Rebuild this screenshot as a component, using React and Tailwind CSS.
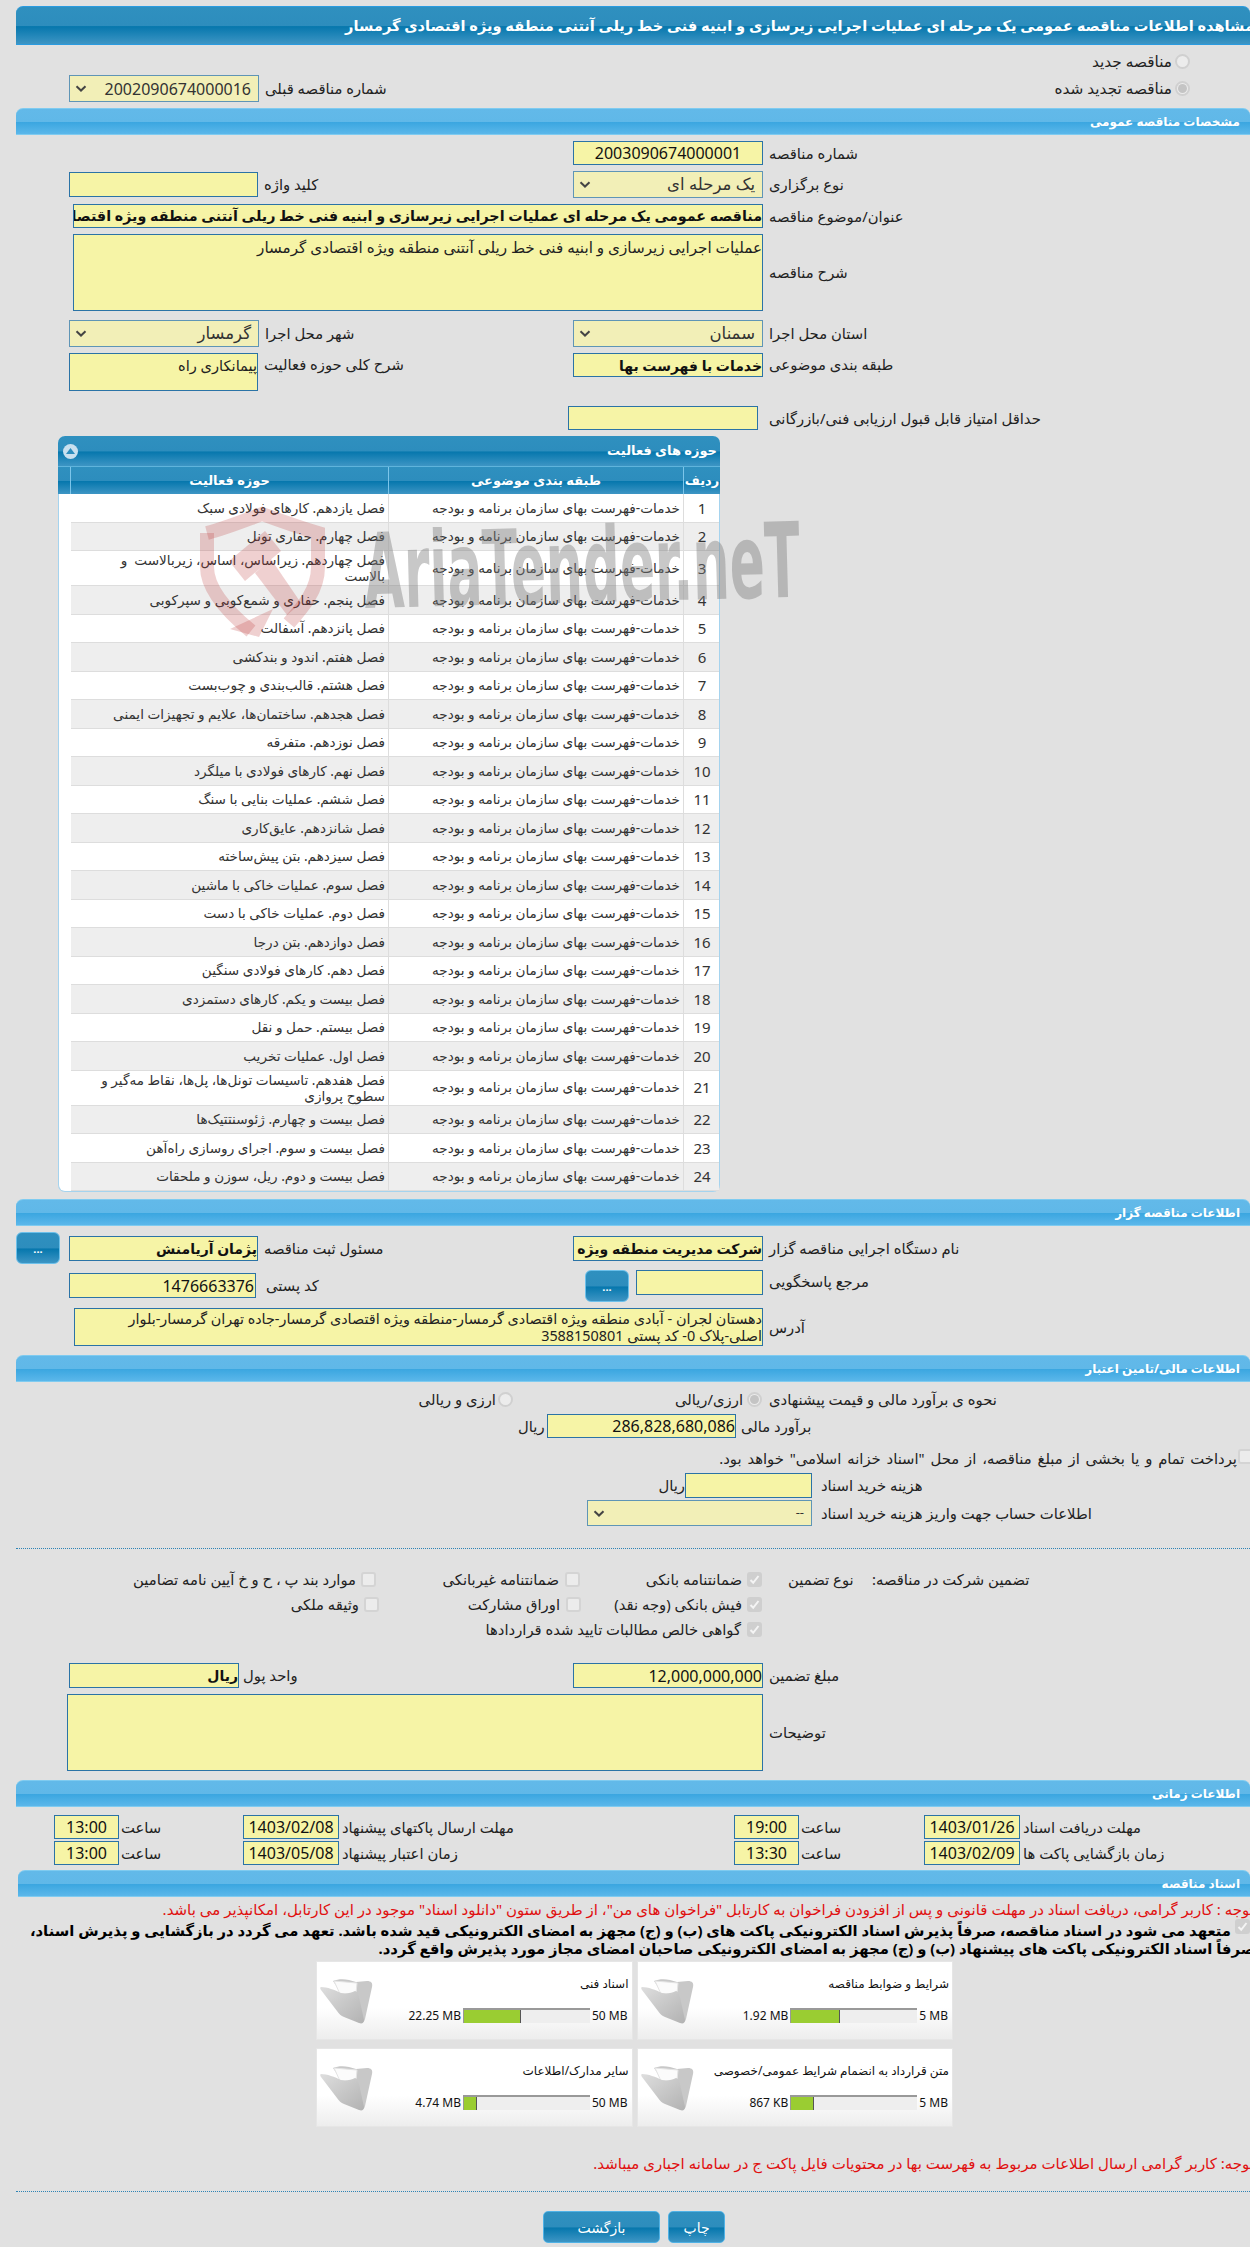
const barCls = "mt-[6px] h-[27px] ml-[16px] rounded-t-[7px] border-t border-b border-[#7fcbf0] bg-[linear-gradient(#62b9e9_0%,#60b8e8_50%,#3aa6e0_52%,#5bb7ea_100%)] flex items-center justify-end pr-[10px] text-white font-bold text-[12px]";
const darkGrad = "bg-[linear-gradient(#2f90bf_0%,#2d8dbd_50%,#0677ad_53%,#3d95c4_100%)]";
const inputCls = "bg-[#f6f4a6] border border-[#2b73a6] shrink-0 flex items-center overflow-hidden whitespace-nowrap text-[#111]";
const selectCls = "bg-[#f2efb7] border border-[#5f95b6] shrink-0 flex items-center justify-between overflow-hidden whitespace-nowrap text-[#333] pl-[5px] pr-[7px]";

function Bar({ children, className = "" }) {
  return <div className={barCls + " " + className}><span dir="rtl">{children}</span></div>;
}
function Label({ children, className = "" }) {
  const gap = className.includes("ml-") ? "" : "ml-[6px] ";
  return <span dir="rtl" className={gap + "whitespace-nowrap text-[14.8px] text-left text-[#222] shrink-0 " + className}>{children}</span>;
}
function Chevron() {
  return (
    <svg width="12" height="7" viewBox="0 0 12 7" fill="none" className="shrink-0">
      <path d="M1.5 1.2 6 5.5 10.5 1.2" stroke="#444" strokeWidth="2" />
    </svg>
  );
}
function Select({ w, children, size = "text-[16.5px]" }) {
  return (
    <div className={selectCls + " " + w + " h-[27px]"}>
      <Chevron />
      <span dir="rtl" className={size}>{children}</span>
    </div>
  );
}
function Radio({ on }) {
  return (
    <span className="w-[15px] h-[15px] rounded-full border-2 border-[#d0d0d0] bg-[#ececec] shrink-0 flex items-center justify-center">
      {on ? <span className="w-[9px] h-[9px] rounded-full bg-[#c4c4c4]" /> : null}
    </span>
  );
}
function Check({ on }) {
  return on ? (
    <span className="w-[15px] h-[15px] rounded-[3px] bg-[#cfcfcf] shrink-0 flex items-center justify-center">
      <svg width="11" height="11" viewBox="0 0 11 11" fill="none"><path d="M1.5 6 4.2 8.8 9.5 2" stroke="#f4f4f4" strokeWidth="2" /></svg>
    </span>
  ) : (
    <span className="block w-[15px] h-[15px] rounded-[3px] border-2 border-[#d4d4d4] bg-[#ececec] shrink-0" />
  );
}
function DotsButton() {
  return (
    <div className={"w-[44px] h-[32px] rounded-[6px] border border-[#6cc0ea] flex items-end justify-center pb-[9px] text-white text-[11px] font-bold leading-none shrink-0 " + darkGrad}>...</div>
  );
}
function Folder() {
  return (
    <svg width="53" height="46" viewBox="0 0 53 46" className="shrink-0">
      <defs>
        <linearGradient id="folderFront" x1="0" y1="0" x2="1" y2="1">
          <stop offset="0" stopColor="#dedede" />
          <stop offset="1" stopColor="#b2b2b2" />
        </linearGradient>
      </defs>
      <path d="M13 3 C20 0 28 1 36 4 L47 3 C51 3 53 5 52 9 L45 41 C44 45 42 45 40 43 Z" fill="#c8c8c8" />
      <path d="M14 3 L37 5 L36 16 L20 16 Z" fill="#fbfbfb" stroke="#e4e4e4" />
      <path d="M1 9 C7 9 15 12 21 15 C26 16 31 15 35 13 C37 13 38 15 39 19 L44 42 C44 45 42 46 39 45 L24 39 C21 38 19 36 17 33 L1 12 C0 11 0 9 1 9 Z" fill="url(#folderFront)" />
    </svg>
  );
}
function Watermark() {
  return (
    <svg width="620" height="150" viewBox="0 0 620 150" className="absolute left-[132px] top-[59px] pointer-events-none z-10">
      <g fill="none" stroke="#bb3a3a" strokeOpacity="0.24" strokeWidth="14">
        <path d="M16 38 C35 33 52 26 71 19 C90 26 110 33 127 38 L127 72 C127 95 112 112 98 128" />
        <path d="M16 38 L16 72 C16 95 38 118 60 136" />
      </g>
      <polygon points="39,134 82,114 68,142" fill="#bb3a3a" fillOpacity="0.24" />
      <g fill="#bb3a3a" fillOpacity="0.24">
        <polygon points="38,66 74,36 90,56 54,86" />
        <polygon points="64,78 80,64 110,108 96,120" />
      </g>
      <text x="174" y="113" textLength="436" lengthAdjust="spacingAndGlyphs" transform="rotate(-1.5 174 113)" fontFamily="'DejaVu Sans', sans-serif" fontWeight="700" fontSize="104" fill="#7c7c7c" fillOpacity="0.42">AriaTender.neT</text>
    </svg>
  );
}
const rows = [
  "فصل یازدهم. کارهای فولادی سبک",
  "فصل چهارم. حفاری تونل",
  "فصل چهاردهم. زیراساس، اساس، زیربالاست\u00a0 و\nبالاست",
  "فصل پنجم. حفاری و شمع‌کوبی و سپرکوبی",
  "فصل پانزدهم. آسفالت",
  "فصل هفتم. اندود و بندکشی",
  "فصل هشتم. قالب‌بندی و چوب‌بست",
  "فصل هجدهم. ساختمان‌ها، علایم و تجهیزات ایمنی",
  "فصل نوزدهم. متفرقه",
  "فصل نهم. کارهای فولادی با میلگرد",
  "فصل ششم. عملیات بنایی با سنگ",
  "فصل شانزدهم. عایق‌کاری",
  "فصل سیزدهم. بتن پیش‌ساخته",
  "فصل سوم. عملیات خاکی با ماشین",
  "فصل دوم. عملیات خاکی با دست",
  "فصل دوازدهم. بتن درجا",
  "فصل دهم. کارهای فولادی سنگین",
  "فصل بیست و یکم. کارهای دستمزدی",
  "فصل بیستم. حمل و نقل",
  "فصل اول. عملیات تخریب",
  "فصل هفدهم. تاسیسات تونل‌ها، پل‌ها، نقاط مه‌گیر و\nسطوح پروازی",
  "فصل بیست و چهارم. ژئوسنتتیک‌ها",
  "فصل بیست و سوم. اجرای روسازی راه‌آهن",
  "فصل بیست و دوم. ریل، سوزن و ملحقات",
];
function TableRow({ n, text }) {
  const tall = n === 3 || n === 21 ? "h-[35px]" : "h-[28.5px]";
  const bg = n % 2 === 0 ? "bg-[#eeeeee]" : "bg-white";
  return (
    <div className={"grid grid-cols-[318px_295px_36px] border-b border-[#dddddd] box-border " + tall + " " + bg}>
      <div dir="rtl" className="flex items-center pr-[3px] border-r border-[#dddddd] text-[13.6px] leading-[16px] text-[#333] whitespace-pre-line"><span>{text}</span></div>
      <div dir="rtl" className="flex items-center pr-[3px] border-r border-[#dddddd] text-[13.6px] text-[#333] whitespace-nowrap">خدمات-فهرست بهای سازمان برنامه و بودجه</div>
      <div className="flex items-center justify-center text-[15px] text-[#333]">{n}</div>
    </div>
  );
}
function Card({ title, value, max, pct }) {
  return (
    <div className="h-[79px] border border-[#e6e6e6] bg-[linear-gradient(#ffffff_0%,#ffffff_60%,#ededed_100%)] flex pl-[3px]">
      <div className="pt-[16px]"><Folder /></div>
      <div className="flex-1 flex flex-col items-end pr-[3px]">
        <div dir="rtl" className="mt-[12px] h-[20px] leading-[20px] text-[12px] text-[#111] whitespace-nowrap">{title}</div>
        <div className="mt-[14px] flex items-center h-[15px] text-[12px] text-[#111] whitespace-nowrap">
          <span className="mr-[2px]">{value}</span>
          <div className="w-[127px] h-[15px] bg-[#eeeeee] border-t-2 border-l border-[#999999]">
            <div className="h-full bg-[#9acd32] border-r border-[#555555]" style={{ width: pct + "%" }} />
          </div>
          <span className="ml-[2px] mr-[1px]">{max}</span>
        </div>
      </div>
    </div>
  );
}
function TimeCell({ w, v }) {
  return <div className={inputCls + " " + w + " h-[24px] justify-center text-[16px]"}>{v}</div>;
}

export default function App() {
  return (
    <div className="w-[1250px] h-[2247px] bg-[#e1e1e1] overflow-hidden font-['Noto_Sans','DejaVu_Sans',sans-serif] text-[#222]">
      {/* title */}
      <div className={"mt-[6px] h-[39px] ml-[16px] rounded-t-[7px] border-t border-b border-[#2a9be0] overflow-hidden flex items-center justify-end " + darkGrad}>
        <span dir="rtl" className="whitespace-nowrap text-white font-bold text-[14.6px] -mr-[4px] shrink-0">مشاهده اطلاعات مناقصه عمومی یک مرحله ای عملیات اجرایی زیرسازی و ابنیه فنی خط ریلی آنتنی منطقه ویژه اقتصادی گرمسار</span>
      </div>
      <div className="mt-[5px] h-[22px] flex items-center justify-end pr-[60px]">
        <Label className="ml-0 mr-[3px] !text-[15.3px]">مناقصه جدید</Label>
        <Radio />
      </div>
      <div className="mt-[3px] h-[27px] flex items-center pl-[69px] pr-[60px]">
        <Select w="w-[190px]" size="text-[16px]">2002090674000016</Select>
        <Label>شماره مناقصه قبلی</Label>
        <div className="flex-1" />
        <Label className="ml-0 mr-[3px] !text-[15.3px]">مناقصه تجدید شده</Label>
        <Radio on />
      </div>

      <Bar>مشخصات مناقصه عمومی</Bar>

      <div className="mt-[6px] h-[24px] flex items-center pl-[573px]">
        <div className={inputCls + " w-[190px] h-[24px] justify-center text-[16px]"}>2003090674000001</div>
        <Label>شماره مناقصه</Label>
      </div>
      <div className="mt-[6px] h-[27px] flex items-center">
        <div className="w-[573px] pl-[69px] flex items-center">
          <div className={inputCls + " w-[189px] h-[25px]"} />
          <Label>کلید واژه</Label>
        </div>
        <Select w="w-[190px]">یک مرحله ای</Select>
        <Label>نوع برگزاری</Label>
      </div>
      <div className="mt-[6px] h-[24px] flex items-center pl-[73px]">
        <div dir="rtl" className={inputCls + " w-[690px] h-[24px] font-bold text-[14.3px] text-[#000]"}>مناقصه عمومی یک مرحله ای عملیات اجرایی زیرسازی و ابنیه فنی خط ریلی آنتنی منطقه ویژه اقتصادی گرمسار</div>
        <Label>عنوان/موضوع مناقصه</Label>
      </div>
      <div className="mt-[6px] h-[77px] flex items-center pl-[73px]">
        <div dir="rtl" className="w-[690px] h-[77px] bg-[#f6f4a6] border border-[#2b73a6] text-[15.2px] leading-[20px] text-[#222] pt-[2px]">عملیات اجرایی زیرسازی و ابنیه فنی خط ریلی آنتنی منطقه ویژه اقتصادی گرمسار</div>
        <Label>شرح مناقصه</Label>
      </div>
      <div className="mt-[9px] h-[27px] flex items-center">
        <div className="w-[573px] pl-[69px] flex items-center">
          <Select w="w-[190px]">گرمسار</Select>
          <Label>شهر محل اجرا</Label>
        </div>
        <Select w="w-[190px]">سمنان</Select>
        <Label>استان محل اجرا</Label>
      </div>
      <div className="mt-[6px] h-[38px] flex items-start">
        <div className="w-[573px] pl-[69px] flex items-start">
          <div dir="rtl" className="w-[189px] h-[38px] bg-[#f6f4a6] border border-[#2b73a6] text-[14.6px] leading-[20px] pt-[1px] whitespace-nowrap text-[#222]">پیمانکاری راه</div>
          <Label className="leading-[20px] pt-[1px]">شرح کلی حوزه فعالیت</Label>
        </div>
        <div dir="rtl" className={inputCls + " w-[190px] h-[24px] font-bold text-[14px] text-[#000]"}>خدمات با فهرست بها</div>
        <Label className="leading-[20px] pt-[1px]">طبقه بندی موضوعی</Label>
      </div>
      <div className="mt-[15px] h-[24px] flex items-center pl-[568px]">
        <div className={inputCls + " w-[190px] h-[24px]"} />
        <Label className="ml-[11px]">حداقل امتیاز قابل قبول ارزیابی فنی/بازرگانی</Label>
      </div>

      {/* panel */}
      <div className="relative mt-[6px] ml-[58px] w-[662px] h-[756px] bg-white border-x border-b border-[#a5d3ee] rounded-t-[7px] rounded-b-[7px] box-border">
        <div className={"-mx-px h-[30px] rounded-t-[7px] flex items-center justify-between pl-[5px] pr-[3px] " + darkGrad}>
          <span className="w-[15px] h-[15px] rounded-full bg-[#c8e0ef] flex items-center justify-center">
            <svg width="9" height="6" viewBox="0 0 9 6"><path d="M4.5 0 9 6H0Z" fill="#2d8dbd" /></svg>
          </span>
          <span dir="rtl" className="text-white font-bold text-[13px]">حوزه های فعالیت</span>
        </div>
        <div className={"-mx-px h-[28px] grid grid-cols-[13px_318px_295px_36px] text-white font-bold text-[13px] border-t border-[#5fb4dc] " + darkGrad}>
          <div className="border-r border-[#7cc5ea]" />
          <div dir="rtl" className="flex items-center justify-center border-r border-[#7cc5ea]">حوزه فعالیت</div>
          <div dir="rtl" className="flex items-center justify-center border-r border-[#7cc5ea]">طبقه بندی موضوعی</div>
          <div dir="rtl" className="flex items-center justify-center">ردیف</div>
        </div>
        <div className="pl-[12px]">
          {rows.map((t, i) => <TableRow key={i} n={i + 1} text={t} />)}
        </div>
        <Watermark />
      </div>

      <Bar className="!mt-[7px]">اطلاعات مناقصه گزار</Bar>
      <div className="mt-[6px] h-[32px] flex items-center">
        <div className="w-[573px] pl-[16px] flex items-center">
          <DotsButton />
          <div dir="rtl" className={inputCls + " ml-[9px] w-[189px] h-[25px] font-bold text-[14px] text-[#000]"}>پژمان آریامنش</div>
          <Label>مسئول ثبت مناقصه</Label>
        </div>
        <div dir="rtl" className={inputCls + " w-[190px] h-[25px] font-bold text-[14px] text-[#000]"}>شرکت مدیریت منطقه ویژه اقتصادی</div>
        <Label>نام دستگاه اجرایی مناقصه گزار</Label>
      </div>
      <div className="mt-[6px] h-[32px] flex items-start">
        <div className="w-[585px] pl-[69px] flex items-center mt-[3px]">
          <div className={inputCls + " w-[187px] h-[25px] justify-end text-[16px] pr-[1px]"}>1476663376</div>
          <Label className="ml-[10px]">کد پستی</Label>
        </div>
        <DotsButton />
        <div className={inputCls + " ml-[7px] w-[127px] h-[25px]"} />
        <Label>مرجع پاسخگویی</Label>
      </div>
      <div className="mt-[6px] h-[38px] flex items-center pl-[74px]">
        <div dir="rtl" className="w-[689px] h-[38px] bg-[#f6f4a6] border border-[#2b73a6] text-[14.4px] leading-[17px] text-[#222] pt-[1px] whitespace-nowrap overflow-hidden">دهستان لجران - آبادی منطقه ویژه اقتصادی گرمسار-منطقه ویژه اقتصادی گرمسار-جاده تهران گرمسار-بلوار<br />اصلی-پلاک 0- کد پستی 3588150801</div>
        <Label>آدرس</Label>
      </div>

      <Bar className="!mt-[9px]">اطلاعات مالی/تامین اعتبار</Bar>
      <div className="mt-[6px] h-[22px] flex items-center pl-[420px]">
        <Label className="ml-0 w-[76px] !text-right">ارزی و ریالی</Label>
        <span className="ml-[2px]"><Radio /></span>
        <div className="w-[164px]" />
        <Label className="ml-0 w-[66px] !text-right">ارزی/ریالی</Label>
        <span className="ml-[4px]"><Radio on /></span>
        <Label className="ml-[7px]">نحوه ی برآورد مالی و قیمت پیشنهادی</Label>
      </div>
      <div className="mt-[4px] h-[24px] flex items-center pl-[518px]">
        <Label className="ml-0 w-[29px]">ریال</Label>
        <div className={inputCls + " w-[189px] h-[24px] justify-end text-[16px]"}>286,828,680,086</div>
        <Label className="ml-[5px]">برآورد مالی</Label>
      </div>
      <div className="mt-[7px] h-[27px] flex items-center justify-end">
        <Label className="ml-0 mr-[1px] [word-spacing:2px]">پرداخت تمام و یا بخشی از مبلغ مناقصه، از محل "اسناد خزانه اسلامی" خواهد بود.</Label>
        <span className="-mr-[3px] -mt-[5px]"><Check /></span>
      </div>
      <div className="mt-px h-[25px] flex items-center pl-[662px]">
        <Label className="ml-0 w-[23px]">ریال</Label>
        <div className={inputCls + " w-[127px] h-[25px]"} />
        <Label className="ml-[9px]">هزینه خرید اسناد</Label>
      </div>
      <div className="mt-[2px] h-[26px] flex items-center pl-[587px]">
        <div className={selectCls + " w-[225px] h-[26px]"}>
          <Chevron />
          <span className="text-[13px]">--</span>
        </div>
        <Label className="ml-[9px]">اطلاعات حساب جهت واریز هزینه خرید اسناد</Label>
      </div>

      <div className="mt-[22px] ml-[16px] border-t border-dotted border-[#2d83b5]" />

      <div className="mt-[18px] h-[25px] flex items-center pl-[130px]">
        <Label className="ml-0 w-[226px] !text-right">موارد بند پ ، ح و خ آیین نامه تضامین</Label>
        <span className="ml-[5px]"><Check /></span>
        <Label className="ml-[61px] w-[122px] !text-right">ضمانتنامه غیربانکی</Label>
        <span className="ml-[6px]"><Check /></span>
        <Label className="ml-[61px] w-[101px] !text-right">ضمانتنامه بانکی</Label>
        <span className="ml-[5px]"><Check on /></span>
        <Label className="ml-[26px] w-[72px]">نوع تضمین</Label>
        <Label className="ml-[12px]">تضمین شرکت در مناقصه:</Label>
      </div>
      <div className="h-[25px] flex items-center pl-[287px]">
        <Label className="ml-0 w-[72px] !text-right">وثیقه ملکی</Label>
        <span className="ml-[5px]"><Check /></span>
        <Label className="ml-[91px] w-[90px] !text-right">اوراق مشارکت</Label>
        <span className="ml-[6px]"><Check /></span>
        <Label className="ml-[25px] w-[136px] !text-right">فیش بانکی (وجه نقد)</Label>
        <span className="ml-[5px]"><Check on /></span>
      </div>
      <div className="h-[25px] flex items-center justify-start pl-[482px]">
        <Label className="ml-0 w-[259px] !text-right">گواهی خالص مطالبات تایید شده قراردادها</Label>
        <span className="ml-[6px]"><Check on /></span>
      </div>

      <div className="mt-[21px] h-[25px] flex items-center">
        <div className="w-[573px] pl-[69px] flex items-center">
          <div dir="rtl" className={inputCls + " w-[170px] h-[25px] font-bold text-[14px] text-[#000]"}>ریال</div>
          <Label className="ml-[4px]">واحد پول</Label>
        </div>
        <div className={inputCls + " w-[190px] h-[25px] justify-end text-[16px]"}>12,000,000,000</div>
        <Label>مبلغ تضمین</Label>
      </div>
      <div className="mt-[6px] h-[77px] flex items-center pl-[67px]">
        <div className="w-[696px] h-[77px] bg-[#f6f4a6] border border-[#2b73a6]" />
        <Label>توضیحات</Label>
      </div>

      <Bar className="!mt-[9px]">اطلاعات زمانی</Bar>
      <div className="mt-[8px] h-[24px] flex items-center pl-[54px]">
        <TimeCell w="w-[65px]" v="13:00" />
        <Label className="ml-[2px] w-[122px]">ساعت</Label>
        <TimeCell w="w-[96px]" v="1403/02/08" />
        <Label className="ml-[3px] w-[392px]">مهلت ارسال پاکتهای پیشنهاد</Label>
        <TimeCell w="w-[65px]" v="19:00" />
        <Label className="ml-[2px] w-[123px]">ساعت</Label>
        <TimeCell w="w-[96px]" v="1403/01/26" />
        <Label className="ml-[3px]">مهلت دریافت اسناد</Label>
      </div>
      <div className="mt-[2px] h-[24px] flex items-center pl-[54px]">
        <TimeCell w="w-[65px]" v="13:00" />
        <Label className="ml-[2px] w-[122px]">ساعت</Label>
        <TimeCell w="w-[96px]" v="1403/05/08" />
        <Label className="ml-[3px] w-[392px]">زمان اعتبار پیشنهاد</Label>
        <TimeCell w="w-[65px]" v="13:30" />
        <Label className="ml-[2px] w-[123px]">ساعت</Label>
        <TimeCell w="w-[96px]" v="1403/02/09" />
        <Label className="ml-[3px]">زمان بازگشایی پاکت ها</Label>
      </div>

      <Bar className="!mt-[5px] !ml-[18px]">اسناد مناقصه</Bar>
      <div className="mt-[2px] h-[20px] flex items-center justify-end">
        <span dir="rtl" className="whitespace-nowrap shrink-0 text-[15px] text-[#e01010] -mr-[4px]">توجه : کاربر گرامی، دریافت اسناد در مهلت قانونی و پس از افزودن فراخوان به کارتابل "فراخوان های من"، از طریق ستون "دانلود اسناد" موجود در این کارتابل، امکانپذیر می باشد.</span>
      </div>
      <div className="mt-[2px] h-[18px] flex items-center justify-end">
        <span dir="rtl" className="whitespace-nowrap shrink-0 font-bold text-[14.8px] text-[#000]">متعهد می شود در اسناد مناقصه، صرفاً پذیرش اسناد الکترونیکی پاکت های (ب) و (ج) مجهز به امضای الکترونیکی قید شده باشد. تعهد می گردد در بازگشایی و پذیرش اسناد،</span>
        <span className="ml-[4px] -mt-[8px]"><Check on /></span>
      </div>
      <div className="h-[18px] flex items-center justify-end">
        <span dir="rtl" className="whitespace-nowrap shrink-0 font-bold text-[14.8px] text-[#000] -mr-[5px]">صرفاً اسناد الکترونیکی پاکت های پیشنهاد (ب) و (ج) مجهز به امضای الکترونیکی صاحبان امضای مجاز مورد پذیرش واقع گردد.</span>
      </div>
      <div className="mt-[4px] ml-[316px] w-[637px] grid grid-cols-2 gap-x-[4px] gap-y-[8px]">
        <Card title="اسناد فنی" value="22.25 MB" max="50 MB" pct={45} />
        <Card title="شرایط و ضوابط مناقصه" value="1.92 MB" max="5 MB" pct={39} />
        <Card title="سایر مدارک/اطلاعات" value="4.74 MB" max="50 MB" pct={10} />
        <Card title="متن قرارداد به انضمام شرایط عمومی/خصوصی" value="867 KB" max="5 MB" pct={18} />
      </div>
      <div className="mt-[26px] h-[20px] flex items-center justify-end">
        <span dir="rtl" className="whitespace-nowrap shrink-0 text-[15px] text-[#e01010] -mr-[4px]">توجه: کاربر گرامی ارسال اطلاعات مربوط به فهرست بها در محتویات فایل پاکت ج در سامانه اجباری میباشد.</span>
      </div>
      <div className="mt-[18px] ml-[16px] border-t border-dotted border-[#2d83b5]" />
      <div className="mt-[19px] h-[32px] flex pl-[543px]">
        <div dir="rtl" className={"w-[117px] h-[32px] rounded-[5px] border border-[#4fb2e6] flex items-center justify-center text-white text-[14px] " + darkGrad}>بازگشت</div>
        <div dir="rtl" className={"ml-[8px] w-[57px] h-[32px] rounded-[5px] border border-[#4fb2e6] flex items-center justify-center text-white text-[14px] " + darkGrad}>چاپ</div>
      </div>
    </div>
  );
}
